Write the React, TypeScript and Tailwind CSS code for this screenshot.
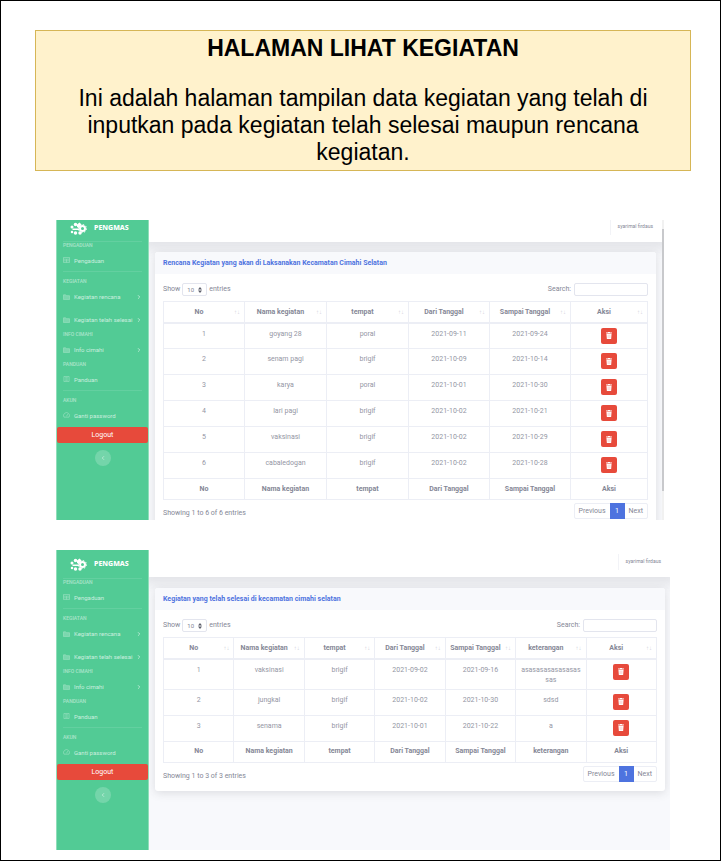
import { ReactNode } from "react";
import { ChevronLeft, ChevronRight } from "lucide-react";

type Column = { label: string; key: string };
type Row = Record<string, string>;

function Logo() {
  return (
    <svg viewBox="0 0 34 26" className="h-[13px] w-[17px]" aria-hidden="true">
      <g fill="#fff">
        <circle cx="4" cy="10" r="3" />
        <circle cx="11" cy="5" r="3.5" />
        <circle cx="4" cy="20" r="2.5" />
        <circle cx="11" cy="22" r="3.5" />
        <circle cx="20" cy="22" r="3.5" />
        <path d="M5 13h13v3H5z" />
        <path d="M14 5l5-4 4 4-5 7-4-2z" />
      </g>
      <circle cx="25" cy="13" r="5" fill="none" stroke="#fff" strokeWidth="4" />
      <circle cx="25" cy="13" r="8" fill="none" stroke="#fff" strokeWidth="2" strokeDasharray="3 3.2" />
    </svg>
  );
}

function TrashIcon() {
  return (
    <svg viewBox="0 0 14 16" className="h-[7px] w-[6px]" aria-hidden="true">
      <path d="M0 1h4l1-1h4l1 1h4v2H0zM1 4h12l-1 12H2z" fill="#fff" />
      <path d="M5 6v8M9 6v8" stroke="#e74a3b" strokeWidth="1" opacity=".6" />
    </svg>
  );
}

function ItemIcon({ kind }: { kind: string }) {
  return (
    <svg viewBox="0 0 16 14" className="h-[6px] w-[7px] shrink-0 opacity-40" fill="none" stroke="#fff" strokeWidth="1.6" aria-hidden="true">
      {kind === "table" && <path d="M1 1h14v12H1zM1 5h14M8 5v8M1 9h14" />}
      {kind === "folder" && <path d="M1 2h5l2 2h7v9H1z" fill="#fff" fillOpacity=".6" />}
      {kind === "book" && <path d="M2 1h12v12H2zM5 4h6M5 7h6M5 10h6" />}
      {kind === "gauge" && <path d="M2 12a7 7 0 1 1 12 0zM8 10l3-5" />}
    </svg>
  );
}

function Heading({ children }: { children: ReactNode }) {
  return <h3 className="h-[7px] px-[6px] text-[5px] leading-[7px] font-medium text-white/50 uppercase">{children}</h3>;
}

function Item({ icon, children, more }: { icon: string; children: ReactNode; more?: boolean }) {
  return (
    <a href="#" className={`flex items-center gap-1 px-[6px] text-[6px] text-white/70 ${more ? "h-[23px]" : "h-[22px]"}`}>
      <ItemIcon kind={icon} />
      <span className="flex-1 whitespace-nowrap">{children}</span>
      {more && <ChevronRight className="size-[6px] shrink-0" strokeWidth={3} />}
    </a>
  );
}

function Sidebar({ top }: { top: string }) {
  return (
    <nav className="relative w-[93px] shrink-0 border-x border-[#8fdeb9] bg-[#52cb95]">
      <div className={`flex items-center gap-[7px] pl-[13px] ${top}`}>
        <Logo />
        <span className="font-['Noto_Sans',sans-serif] text-[7px] font-extrabold text-white">PENGMAS</span>
      </div>
      <hr className="mx-[6px] border-white/10" />
      <Heading>Pengaduan</Heading>
      <Item icon="table">Pengaduan</Item>
      <hr className="mx-[6px] mb-[6px] border-white/10" />
      <Heading>Kegiatan</Heading>
      <Item icon="folder" more>Kegiatan rencana</Item>
      <Item icon="folder" more>Kegiatan telah selesai</Item>
      <Heading>Info cimahi</Heading>
      <Item icon="folder" more>Info cimahi</Item>
      <Heading>Panduan</Heading>
      <Item icon="book">Panduan</Item>
      <hr className="mx-[6px] mb-[6px] border-white/10" />
      <Heading>Akun</Heading>
      <Item icon="gauge">Ganti password</Item>
      <button className="mt-px flex h-4 w-full items-center justify-center rounded-[2px] bg-[#e74a3b] text-[7px] text-white">Logout</button>
      <button aria-label="Tutup menu" className="mx-auto mt-[7px] flex size-4 items-center justify-center rounded-full bg-white/20 text-white/60">
        <ChevronLeft className="size-[6px]" strokeWidth={3} />
      </button>
    </nav>
  );
}

function DataTable({ columns, rows, widths }: { columns: Column[]; rows: Row[]; widths: string[] }) {
  const cell = "border border-[#eceef5]";
  return (
    <table className="w-full table-fixed border-collapse text-center">
      <colgroup>
        {columns.map((c, i) => (
          <col key={c.key} className={widths[i]} />
        ))}
      </colgroup>
      <thead>
        <tr className="h-[21px] border-b-2 border-[#eceef5]">
          {columns.map((c) => (
            <th key={c.key} className={`${cell} p-0 font-bold`}>
              <div className="flex items-center pr-1">
                <span className="flex-1 whitespace-nowrap">{c.label}</span>
                <span className="text-[6px] font-normal text-[#cfd1da]">↑↓</span>
              </div>
            </th>
          ))}
        </tr>
      </thead>
      <tbody className="text-[#9496a4]">
        {rows.map((r, i) => (
          <tr key={i} className="h-[26px]">
            {columns.map((c) => (
              <td key={c.key} className={`${cell} px-1 pb-1 align-top leading-[10px] ${c.key === "aksi" ? "pt-1" : "pt-[5px]"}`}>
                {c.key === "aksi" ? (
                  <button aria-label="Hapus" className="mx-auto flex size-4 items-center justify-center rounded-[2px] bg-[#e74a3b]">
                    <TrashIcon />
                  </button>
                ) : c.key === "no" ? i + 1 : r[c.key]}
              </td>
            ))}
          </tr>
        ))}
      </tbody>
      <tfoot>
        <tr className="h-[21px]">
          {columns.map((c) => (
            <th key={c.key} className={`${cell} p-0 font-bold whitespace-nowrap`}>{c.label}</th>
          ))}
        </tr>
      </tfoot>
    </table>
  );
}

type ScreenProps = {
  id: string;
  title: string;
  columns: Column[];
  rows: Row[];
  widths: string[];
  brand: string;
  top: string;
  frame: string;
  body: string;
  scrollbar?: boolean;
};

function Screen({ id, title, columns, rows, widths, brand, top, frame, body, scrollbar }: ScreenProps) {
  return (
    <section className={`flex h-[300px] overflow-hidden font-[Roboto,sans-serif] text-[7px] text-[#858796] ${frame}`}>
      <Sidebar top={brand} />
      <div className="min-w-0 flex-1 overflow-hidden bg-[#f8f9fc]">
        <header className={`flex items-center justify-end bg-white pr-[9px] text-[5px] shadow-[0_2px_10px_6px_rgba(58,59,69,0.10)] ${top}`}>
          <span className="flex h-4 items-center border-l border-[#f2f3f7] pl-[7px]">syarimal firdaus</span>
        </header>
        <div className={`pl-[6px] ${body}`}>
          <div className="relative rounded-[3px] bg-white shadow-[0_2px_10px_rgba(58,59,69,0.15)]">
            <h2 className="h-[22px] rounded-t-[3px] bg-[#f8f9fc] px-2 leading-[22px] font-bold text-[#4e73df]">{title}</h2>
            <div className="px-2 pt-2 pb-[9px]">
              <div className="mb-[5px] flex h-[14px] items-center justify-between">
                <div className="flex items-center gap-[2px]">
                  <label htmlFor={`${id}-jumlah`}>Show</label>
                  <span className="relative flex">
                    <select id={`${id}-jumlah`} defaultValue="10" className="h-[13px] w-[25px] appearance-none rounded-[2px] border border-[#e3e5ee] bg-white pl-1 text-[6px]">
                      <option>10</option>
                    </select>
                    <svg viewBox="0 0 4 6" className="pointer-events-none absolute top-[4px] right-[5px] h-[6px] w-[4px]" fill="#5a5c69" aria-hidden="true">
                      <path d="M2 0l2 2.5H0zM2 6L0 3.5h4z" />
                    </svg>
                  </span>
                  <span>entries</span>
                </div>
                <label htmlFor={`${id}-cari`} className="flex items-center gap-[3px]">
                  Search:
                  <input id={`${id}-cari`} type="search" className="h-[13px] w-[74px] rounded-[2px] border border-[#e3e5ee] bg-white" />
                </label>
              </div>
              <DataTable columns={columns} rows={rows} widths={widths} />
              <div className="mt-[3px] flex items-start justify-between">
                <p className="pt-[5px] leading-[10px]">Showing 1 to {rows.length} of {rows.length} entries</p>
                <div className="flex h-4 items-stretch rounded-[2px] border border-[#eceef5] leading-[14px]">
                  <button className="px-1">Previous</button>
                  <button className="-my-px w-[15px] bg-[#4e73df] text-white">1</button>
                  <button className="px-1">Next</button>
                </div>
              </div>
            </div>
          </div>
        </div>
      </div>
      {scrollbar && (
        <div className="w-[2px] shrink-0 bg-[#f1f1f1] pt-[9px]">
          <div className="h-[262px] bg-[#c8c9cc]" />
        </div>
      )}
    </section>
  );
}

const planColumns: Column[] = [
  { label: "No", key: "no" },
  { label: "Nama kegiatan", key: "nama" },
  { label: "tempat", key: "tempat" },
  { label: "Dari Tanggal", key: "dari" },
  { label: "Sampai Tanggal", key: "sampai" },
  { label: "Aksi", key: "aksi" },
];
const doneColumns: Column[] = [...planColumns.slice(0, 5), { label: "keterangan", key: "ket" }, planColumns[5]];
const planWidths = ["w-[81px]", "w-[82px]", "w-[82px]", "w-[81px]", "w-[81px]", ""];

const planRows: Row[] = [
  { nama: "goyang 28", tempat: "poral", dari: "2021-09-11", sampai: "2021-09-24" },
  { nama: "senam pagi", tempat: "brigif", dari: "2021-10-09", sampai: "2021-10-14" },
  { nama: "karya", tempat: "poral", dari: "2021-10-01", sampai: "2021-10-30" },
  { nama: "lari pagi", tempat: "brigif", dari: "2021-10-02", sampai: "2021-10-21" },
  { nama: "vaksinasi", tempat: "brigif", dari: "2021-10-02", sampai: "2021-10-29" },
  { nama: "cabaledogan", tempat: "brigif", dari: "2021-10-02", sampai: "2021-10-28" },
];
const doneRows: Row[] = [
  { nama: "vaksinasi", tempat: "brigif", dari: "2021-09-02", sampai: "2021-09-16", ket: "asasasasasasasas sas" },
  { nama: "jungkal", tempat: "brigif", dari: "2021-10-02", sampai: "2021-10-30", ket: "sdsd" },
  { nama: "senama", tempat: "brigif", dari: "2021-10-01", sampai: "2021-10-22", ket: "a" },
];

export default function App() {
  return (
    <main className="min-h-screen border border-black bg-white px-[34px] pt-[29px] pb-[10px] font-['Liberation_Sans',Arial,sans-serif] text-black">
      <div className="-mr-[5px] border border-[#d6b656] bg-[#fff2cc] px-8 py-1 text-center text-[23px] leading-[27px]">
        <h1 className="mb-[23px] font-bold">HALAMAN LIHAT KEGIATAN</h1>
        <p>Ini adalah halaman tampilan data kegiatan yang telah di inputkan pada kegiatan telah selesai maupun rencana kegiatan.</p>
      </div>
      <div className="mt-[49px] space-y-[30px] pl-[21px]">
        <Screen
          id="rencana"
          title="Rencana Kegiatan yang akan di Laksanakan Kecamatan Cimahi Selatan"
          columns={planColumns}
          rows={planRows}
          widths={planWidths}
          brand="h-[21px] pb-[5px]"
          top="h-[22px] pb-[8px]"
          frame="mr-[22px]"
          body="pt-[10px] pr-[6px]"
          scrollbar
        />
        <Screen
          id="selesai"
          title="Kegiatan yang telah selesai di kecamatan cimahi selatan"
          columns={doneColumns}
          rows={doneRows}
          widths={[]}
          brand="h-[28px]"
          top="h-[27px] pb-[3px]"
          frame="mr-[16px]"
          body="pt-[11px] pr-[5px]"
        />
      </div>
    </main>
  );
}
